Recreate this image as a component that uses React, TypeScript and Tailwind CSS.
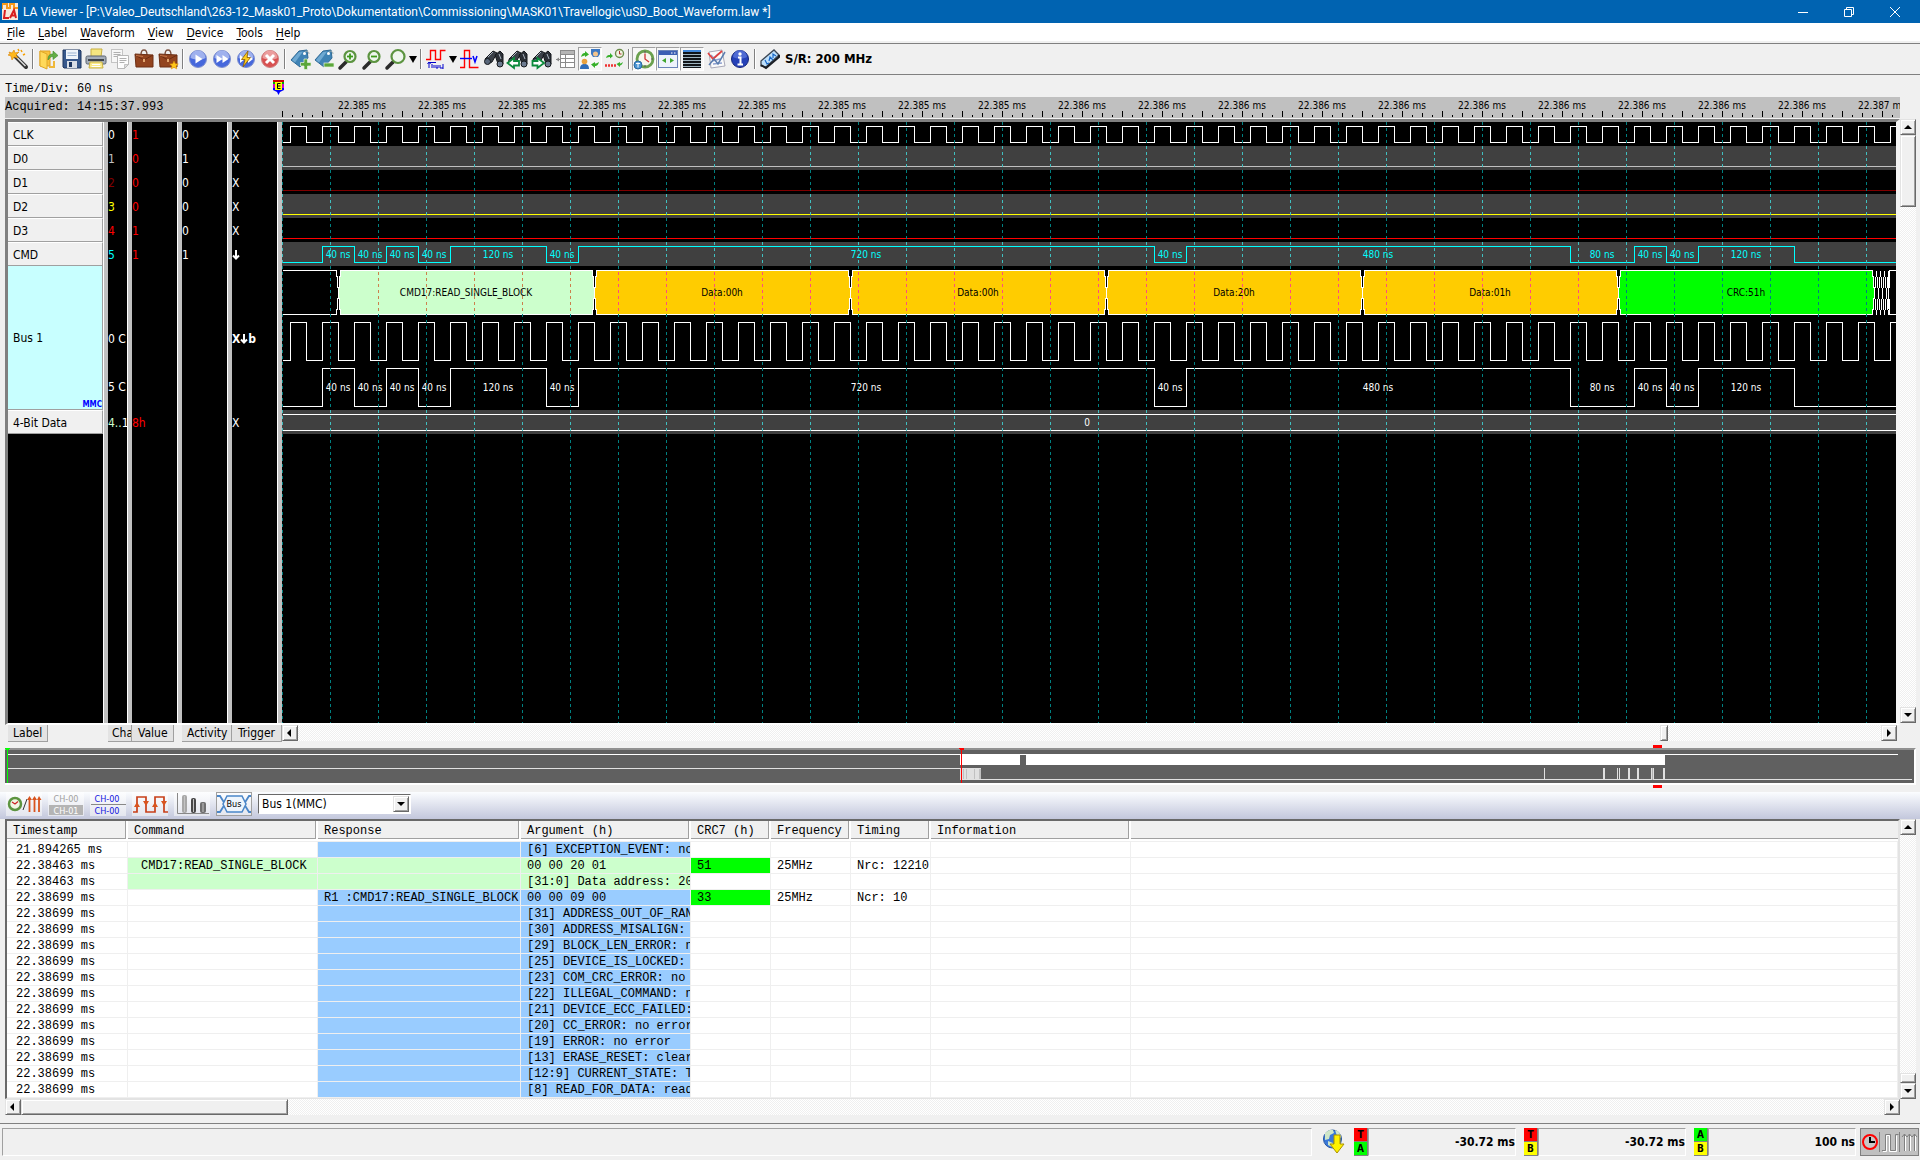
import type { ReactNode } from "react";
import clsx from "clsx";

const TRACK =
  "bg-[repeating-conic-gradient(#ffffff_0_25%,#efefef_0_50%)] bg-[length:2px_2px]";
const RAISED =
  "border border-t-[#e3e3e3] border-l-[#e3e3e3] border-r-[#696969] border-b-[#696969] bg-[#f0f0f0] shadow-[inset_1px_1px_#ffffff,inset_-1px_-1px_#a0a0a0]";
const SANS = "font-['DejaVu_Sans_Condensed','DejaVu_Sans',sans-serif]";
const MONO = "font-['Liberation_Mono',monospace]";

const MENUS = ["File", "Label", "Waveform", "View", "Device", "Tools", "Help"];

/* ---------- toolbar icons ---------- */

function Icon({ children }: { children: ReactNode }) {
  return (
    <svg width="24" height="24" viewBox="0 0 24 24" fill="none" className="shrink-0">
      {children}
    </svg>
  );
}

const Wand = (
  <Icon>
    <path d="M8 8l12 12" stroke="#333" strokeWidth="4" strokeLinecap="round" />
    <path d="M9 8.500l10.500 10.500" stroke="#ddd" strokeWidth="1.500" />
    <path d="M3 5l3 1 2-3 1 3 4-1-3 3 2 3-4-1-2 3-1-4-3-1 2-1z" fill="#ffb81c" stroke="#d98200" strokeWidth=".6" />
    <path d="M15 3l1 2M17 8l2-1M12 2l1 2" stroke="#f5a000" strokeWidth="1.500" />
  </Icon>
);
const Open = (
  <Icon>
    <path d="M4 4h10v15H4z" fill="#f9c440" stroke="#e0a020" />
    <path d="M4 4l7 3v15l-7-3z" fill="#ffd95a" stroke="#e0a828" />
    <path d="M13 20h5v-6" stroke="#efb83a" strokeWidth="2" />
    <path d="M12 13c0-5 2-6 5-6V4l5 4.500-5 4V9.500c-2 0-3 1-5 3.500z" fill="#63ad45" stroke="#3f8a2b" strokeWidth=".6" />
  </Icon>
);
const Save = (
  <Icon>
    <path d="M3 3h17l1 1v17H4l-1-1z" fill="#37588c" stroke="#1c355f" />
    <rect x="6" y="3" width="12" height="9" fill="#eef4fb" />
    <path d="M7.500 6h9M7.500 8.500h9" stroke="#9bb4d3" />
    <rect x="7" y="14" width="10" height="7" fill="#d9dee6" />
    <rect x="9" y="15" width="3" height="5" fill="#1c355f" />
  </Icon>
);
const Print = (
  <Icon>
    <path d="M7 2h11l-1 8H7z" fill="#f5e680" stroke="#c9b042" />
    <rect x="2" y="9" width="20" height="8" rx="1.500" fill="#a4adb9" stroke="#5a636f" />
    <rect x="4" y="12" width="16" height="2" fill="#3d4249" />
    <path d="M6 15h12l1 6H5z" fill="#fbeb8a" stroke="#c9b042" />
    <path d="M8 17.500h8M7.500 19.500h9" stroke="#fff" />
  </Icon>
);
const Copy = (
  <Icon>
    <rect x="3.500" y="2.500" width="11" height="13" fill="#f7f7f7" stroke="#c4c4c4" />
    <path d="M5.500 5.500h7M5.500 7.500h7M5.500 9.500h7" stroke="#b0b0b0" />
    <path d="M9.500 8.500h11v9l-4 4h-7z" fill="#fdfdfd" stroke="#b8b8b8" />
    <path d="M11.500 11.500h7M11.500 13.500h7M11.500 15.500h5" stroke="#b0b0b0" />
    <path d="M20.500 17.500l-4 4v-4z" fill="#ddd" stroke="#b0b0b0" strokeWidth=".7" />
  </Icon>
);
const caseBody = (
  <>
    <path d="M9 8c0-4 1-5 3-5s3 1 3 5" stroke="#7d5240" strokeWidth="1.400" />
    <path d="M3 7l18 1v12L4 20z" fill="#93441f" stroke="#6d2f15" />
    <path d="M3 8l9 5 9-5" stroke="#6d2d12" />
    <path d="M4 8.500l7 1" stroke="#c4754a" />
    <rect x="11" y="12" width="2" height="3" fill="#e2a56f" />
  </>
);
const Case = <Icon>{caseBody}</Icon>;
const CaseStar = (
  <Icon>
    {caseBody}
    <path d="M18 14l1.300 2.800 3 .2-2.300 2 .8 3-2.800-1.600L15.200 22l.8-3-2.300-2 3-.2z" fill="#ffc61a" stroke="#d98c00" strokeWidth=".5" />
  </Icon>
);

function Ball({ tone, children }: { tone: "blue" | "red"; children: ReactNode }) {
  const [edge, low, high] =
    tone === "blue" ? ["#7f90cf", "#4668dc", "#b5c3f2"] : ["#cf8080", "#d85050", "#f0b0b0"];
  return (
    <Icon>
      <circle cx="12" cy="12" r="8.500" fill={low} stroke={edge} />
      <path d="M4.500 11a7.500 7.500 0 0 1 15 0c-4 2-10 2-15 0z" fill={high} opacity=".8" />
      {children}
    </Icon>
  );
}
const Play = (
  <Ball tone="blue">
    <path d="M9.500 7.500v9l7-4.500z" fill="#fff" />
  </Ball>
);
const FastForward = (
  <Ball tone="blue">
    <path d="M6.500 8v8l6-4zM12.500 8v8l6-4z" fill="#fff" />
  </Ball>
);
const Bolt = (
  <Ball tone="blue">
    <path d="M6 8v8l5-4zM14 8v8l5-4z" fill="#fff" />
    <path d="M14 4L7.500 12.500H11L9 20l7.500-9.500H13z" fill="#ffce1f" stroke="#8a5b00" strokeWidth=".8" />
  </Ball>
);
const Stop = (
  <Ball tone="red">
    <path d="M8 8l8 8M16 8l-8 8" stroke="#fff" strokeWidth="3" />
  </Ball>
);

const tagBody = (
  <>
    <path d="M3 13L11 4l8-1 1 8-8 9z" fill="#3f83b5" stroke="#2f6a96" />
    <path d="M4 13l7-8 4-.5-8 11z" fill="#6fa9d2" />
    <path d="M16 6c2-3 5-2 5 1" stroke="#9aa" strokeWidth="1" />
    <circle cx="16.500" cy="6.500" r="1.500" fill="#fff" />
  </>
);
const TagAdd = (
  <Icon>
    {tagBody}
    <path d="M16 12h3.500v3.500H23V19h-3.500v3.500H16V19h-3.500v-3.500H16z" fill="#5ba63a" stroke="#e8f3e2" strokeWidth=".7" />
  </Icon>
);
const TagRemove = (
  <Icon>
    {tagBody}
    <rect x="12" y="16" width="10" height="4" fill="#5ba63a" stroke="#e8f3e2" strokeWidth=".7" />
  </Icon>
);
function Lens({ sign, big }: { sign?: "+" | "-"; big?: boolean }) {
  return (
    <Icon>
      <path d={big ? "M9 15l-6 6" : "M10 15l-6 6"} stroke="#2b2b2b" strokeWidth="3.500" strokeLinecap="round" />
      <circle cx="14" cy="9.500" r={big ? 6.5 : 5.5} fill="#eef6ee" stroke="#5c9440" strokeWidth="2.200" />
      {sign && <path d="M11 9.500h6" stroke="#3c9a1a" strokeWidth="1.800" />}
      {sign === "+" && <path d="M14 6.500v6" stroke="#3c9a1a" strokeWidth="1.800" />}
    </Icon>
  );
}
const TrigWave = (
  <Icon>
    <path d="M2 12.500h4.500v-9h5v9h5v-9h5" stroke="#f00" strokeWidth="1.400" />
    <path d="M5 21v-6M3.500 17L5 15l1.500 2M5 15.500h7M8 17v4M10 21v-3M12 18v3h2v-3M16 18v3h3M19 17v5" stroke="#00c" />
  </Icon>
);
const VoltWave = (
  <Icon>
    <path d="M2 20.500h4.500v-17h5v17h9" stroke="#f00" strokeWidth="1.400" />
    <path d="M2 11.500h12" stroke="#00f" strokeWidth="1.400" />
    <path d="M15 9l2 6 2-6" stroke="#00f" strokeWidth="1.500" />
  </Icon>
);
const glasses = (
  <>
    <path d="M3 12l8-8 4 2-5 9-4 2z" fill="#3b4048" stroke="#15181c" />
    <path d="M13 8l5-4 3 3v10l-4 2-2-5z" fill="#2b2f36" stroke="#15181c" />
    <circle cx="5.500" cy="14.500" r="3" fill="#59677a" stroke="#15181c" />
    <circle cx="18" cy="17" r="3" fill="#6d7b90" stroke="#15181c" />
    <path d="M6 10l5-5M17 7l2 5" stroke="#aab3bf" />
  </>
);
const Find = <Icon>{glasses}</Icon>;
const FindPrev = (
  <Icon>
    {glasses}
    <path d="M1.500 16L8 11v3h5v4.500H8V21z" fill="#fff" stroke="#0b8a3b" strokeWidth="1.800" />
  </Icon>
);
const FindNext = (
  <Icon>
    {glasses}
    <path d="M14 16l-6.500-5v3h-5v4.500h5V21z" fill="#fff" stroke="#0b8a3b" strokeWidth="1.800" />
  </Icon>
);
const ListView = (
  <Icon>
    <rect x="6.500" y="3.500" width="14" height="17" fill="#fff" stroke="#8a8a8a" />
    <rect x="7" y="4" width="13" height="3" fill="#b5b5b5" />
    <path d="M7 7.500h14M7 11.500h14M7 15.500h14M11.500 7v13M2 12.500h4" stroke="#8a8a8a" />
    <path d="M2 12.500l3-2v4z" fill="#8a8a8a" />
  </Icon>
);
const Users = (
  <Icon>
    <path d="M13 2h9v5l-2 3h-5l-2-3z" fill="#3d79c4" />
    <circle cx="17.500" cy="7" r="2.500" fill="#f4c48c" />
    <path d="M2 22c0-4 2-5 4.500-5S11 18 11 22z" fill="#2f6cb8" />
    <circle cx="6.500" cy="14.500" r="2.800" fill="#e9a13d" />
    <path d="M3 10c1-4 3-4 4-4V4l4 3.500L7 10V8.500C6 8.500 5 9 3 10zM21 15c-1 4-3 4-4 4v2l-4-3.500 4-2.500v1.500c1 0 2-.5 4-1.500z" fill="#36b02a" />
  </Icon>
);
const ClockArrow = (
  <Icon>
    <circle cx="17.500" cy="6.500" r="4" fill="#f3f3e3" stroke="#6b8d4b" strokeWidth="1.400" />
    <path d="M17.500 4v3h2" stroke="#a33" />
    <path d="M4 11c1-3 2-3 4-3V6l3 3-3 2.500V10c-1 0-2 0-4 1zM21 15c-1 3-2 3-3 3.500v1.500l-3.500-3 3.500-2v1.500c1 0 1-.5 3-1.500z" fill="#36b02a" />
    <path d="M3 18.500h11" stroke="#e33" strokeWidth="2.500" strokeDasharray="2 1" />
  </Icon>
);
const BigClock = (
  <Icon>
    <circle cx="13" cy="12" r="8" fill="#f6f6ec" stroke="#6aa04e" strokeWidth="2.800" />
    <path d="M13 6.500V12l4 3" stroke="#c33" strokeWidth="1.300" />
    <path d="M13 4v2M19 12h2M13 18v2" stroke="#555" />
    <circle cx="6" cy="18" r="4" fill="#4a94d4" stroke="#2768a0" />
    <path d="M6 15.500v5M4 16.500h4" stroke="#fff" />
  </Icon>
);
const WindowFit = (
  <Icon>
    <rect x="2.500" y="3.500" width="19" height="17" fill="#eef3fb" stroke="#6b84b8" />
    <rect x="3" y="4" width="18" height="4" fill="#3c5fb4" />
    <path d="M15 6h1.500M18 6h1.500" stroke="#fff" />
    <path d="M10 11v5l-4-2.500zM14 11v5l4-2.500z" fill="#3fa52d" />
  </Icon>
);
const Lines = (
  <Icon>
    <rect x="3" y="3" width="18" height="18" fill="#101418" />
    <path d="M3 4h18" stroke="#3f86d8" strokeWidth="2" />
    <path d="M3 7.500h18M3 10.500h18M3 13.500h18M3 16.500h18M3 19.500h18" stroke="#9fb4bf" />
  </Icon>
);
const Check = (
  <Icon>
    <path d="M5 5l13-2 3 16-14 2z" fill="#fafafa" stroke="#a8a8b8" />
    <path d="M7 8l3 3M14 7l-4 4M8 14l8-2M9 17l9-1" stroke="#8fa0d0" strokeWidth="1.300" />
    <path d="M4 6l5 6 9-8" stroke="#e04040" strokeWidth="1.700" />
    <path d="M5 18l5-6 4 5 7-12" stroke="#5a7cae" strokeWidth="1.500" />
  </Icon>
);
const Info = (
  <Icon>
    <circle cx="12" cy="12" r="8.500" fill="#2541b8" stroke="#14257c" />
    <path d="M5 10a7 7 0 0 1 14 0c-4 2-10 2-14 0z" fill="#5f7ce0" opacity=".7" />
    <circle cx="12" cy="7" r="1.700" fill="#fff" />
    <path d="M10 10.500h2.500V17M9.500 17.500h5.500" stroke="#fff" strokeWidth="2" />
  </Icon>
);
const Ticket = (
  <Icon>
    <path d="M3 14L16 3l5 5L8 20l-5-1z" fill="#bfe0fb" stroke="#3b4654" strokeWidth="1.300" />
    <path d="M3 18l5 3 13-11V8" fill="none" stroke="#1b1f26" strokeWidth="2" />
    <path d="M7 13l2 4 2-1M11 14l1-4 3 3M15 11v-4l3 2" stroke="#1667c8" strokeWidth="1.200" />
  </Icon>
);

function Tool({ name, pressed, children }: { name: string; pressed?: boolean; children: ReactNode }) {
  return (
    <button
      type="button"
      aria-label={name}
      className={clsx(
        "flex size-6 items-center justify-center border",
        pressed
          ? "border-t-[#a0a0a0] border-r-white border-b-white border-l-[#a0a0a0] bg-[#f7f7f7]"
          : "border-transparent"
      )}
    >
      {children}
    </button>
  );
}

function Caret({ name }: { name: string }) {
  return (
    <button type="button" aria-label={name} className="flex h-6 w-[10px] items-center justify-center">
      <svg width="8" height="7" viewBox="0 0 8 7">
        <path d="M0 0h8L4 7z" />
      </svg>
    </button>
  );
}

const Sep = () => <div className="mx-[2px] h-5 w-[2px] border-l border-[#808080] bg-white" />;

/* ---------- scroll bars ---------- */

const ARROWS = {
  up: "M4 1l4 4H0z",
  down: "M0 1h8L4 5z",
  left: "M5 0v8L1 4z",
  right: "M2 0v8l4-4z",
};

function ScrollButton({ dir }: { dir: keyof typeof ARROWS }) {
  const vertical = dir === "up" || dir === "down";
  return (
    <button type="button" aria-label={`Scroll ${dir}`} className={clsx("flex size-4 shrink-0 items-center justify-center", RAISED)}>
      <svg width="8" height={vertical ? 6 : 8} viewBox={vertical ? "0 0 8 6" : "0 0 8 8"}>
        <path d={ARROWS[dir]} />
      </svg>
    </button>
  );
}

/* ---------- waveform ---------- */

const DIV = 48;
const DIVS = 34;
const END = 1900;

const SIGNALS = [
  { name: "CLK", ch: "0", chColor: "text-white", value: "1", activity: "0", trigger: "any" },
  { name: "D0", ch: "1", chColor: "text-[#c0c0c0]", value: "0", activity: "1", trigger: "any" },
  { name: "D1", ch: "2", chColor: "text-[#800000]", value: "0", activity: "0", trigger: "any" },
  { name: "D2", ch: "3", chColor: "text-[#ffff00]", value: "0", activity: "0", trigger: "any" },
  { name: "D3", ch: "4", chColor: "text-[#ff0000]", value: "1", activity: "0", trigger: "any" },
  { name: "CMD", ch: "5", chColor: "text-[#00ffff]", value: "1", activity: "1", trigger: "falling" },
];

// CMD line: edges in pixels from the left end, the first one rising
const EDGES = [40, 72, 104, 136, 168, 264, 296, 872, 904, 1288, 1352, 1384, 1416, 1512];
const PULSES = ["40 ns", "40 ns", "40 ns", "40 ns", "120 ns", "40 ns", "720 ns", "40 ns", "480 ns", "80 ns", "40 ns", "40 ns", "120 ns"];

const PACKETS = [
  { text: "CMD17:READ_SINGLE_BLOCK", fill: "#ccffcc", grid: "#cc7f4c" },
  { text: "Data:00h", fill: "#ffcc00", grid: "#ff4c80" },
  { text: "Data:00h", fill: "#ffcc00", grid: "#ff4c80" },
  { text: "Data:20h", fill: "#ffcc00", grid: "#ff4c80" },
  { text: "Data:01h", fill: "#ffcc00", grid: "#ff4c80" },
  { text: "CRC:51h", fill: "#00ff00", grid: "#007f80" },
];
const PACKET_START = 56;
const PACKET_WIDTH = 256;

function clockPath(high: number, low: number) {
  let d = `M0 ${low}`;
  for (let x = 8; x < END; x += 32) d += `H${x}V${high}H${x + 16}V${low}`;
  return d;
}

function cmdPath(high: number, low: number) {
  const steps = EDGES.map((x, i) => `H${x}V${i % 2 === 0 ? high : low}`);
  return `M0 ${low}${steps.join("")}H${END}`;
}

// six-sided stepped outline of one decoded packet
function packetPath(a: number, b: number) {
  return `M${a + 2} 148H${b - 2}v6h1v11h1v11h-1v11h-1v5H${a + 2}v-5h-1v-11h-1v-11h1v-11h1z`;
}

const BANDS = [
  { from: 0, to: 24, color: "#008080" },
  { from: 24, to: 48, color: "#40c0c0" },
  { from: 48, to: 72, color: "#008080" },
  { from: 72, to: 96, color: "#40c0c0" },
  { from: 96, to: 120, color: "#008080" },
  { from: 120, to: 144, color: "#40c0c0" },
  { from: 144, to: 148, color: "#008080" },
  { from: 148, to: 192, color: "packet" },
  { from: 192, to: 288, color: "#008080" },
  { from: 288, to: 312, color: "#40c0c0" },
  { from: 312, to: 2000, color: "#008080" },
];

function packetGridColor(x: number) {
  const packet = PACKETS[Math.floor((x - PACKET_START) / PACKET_WIDTH)];
  return packet ? packet.grid : "#008080";
}

function PulseLabels({ y, className }: { y: number; className: string }) {
  return (
    <g className={className}>
      {PULSES.map((text, i) => (
        <text key={i} x={(EDGES[i] + EDGES[i + 1]) / 2} y={y} textAnchor="middle">
          {text}
        </text>
      ))}
    </g>
  );
}

function Waveform() {
  return (
    <div className="relative min-w-0 flex-1 overflow-hidden bg-black">
      <svg className={clsx("absolute inset-0 h-full w-full text-[10px]", SANS)} fill="none">
        {[24, 72, 120, 288].map((y) => (
          <rect key={y} x="0" y={y} width="100%" height="24" fill="#404040" />
        ))}
        <g transform="translate(.5 .5)" shapeRendering="crispEdges">
          <path d={clockPath(4, 20)} stroke="#fff" />
          <path d={`M0 44H${END}`} stroke="#c0c0c0" />
          <path d={`M0 68H${END}`} stroke="#800000" />
          <path d={`M0 92H${END}`} stroke="#ffff00" />
          <path d={`M0 116H${END}`} stroke="#ff0000" />
          <path d={cmdPath(124, 140)} stroke="#00ffff" />
          <path d="M0 148H54v6h1v11h1v11h-1v11h-1v5H0" stroke="#fff" />
          {PACKETS.map((p, i) => (
            <path
              key={i}
              d={packetPath(PACKET_START + i * PACKET_WIDTH, PACKET_START + (i + 1) * PACKET_WIDTH)}
              fill={p.fill}
              stroke="#fff"
            />
          ))}
          {[1592, 1596, 1600, 1604].map((x) => (
            <path key={x} d={`M${x + 2} 148v6M${x + 1} 154v11M${x + 3} 154v11M${x} 165v11M${x + 1} 176v11M${x + 3} 176v11M${x + 2} 187v5`} stroke="#fff" />
          ))}
          <path d={`M${END} 148H1607v6h-1v32h1v6H${END}`} stroke="#fff" />
          <path d={clockPath(200, 238)} stroke="#fff" />
          <path d={cmdPath(246, 284)} stroke="#fff" />
          <path d={`M0 292H${END}M0 308H${END}`} stroke="#fff" />
        </g>
        <PulseLabels y={136} className="fill-[#00ffff]" />
        <PulseLabels y={269} className="fill-white" />
        <g className="fill-black">
          {PACKETS.map((p, i) => (
            <text key={i} x={PACKET_START + (i + 0.5) * PACKET_WIDTH} y="174" textAnchor="middle">
              {p.text}
            </text>
          ))}
        </g>
        <text x="805" y="304" textAnchor="middle" className="fill-white">
          0
        </text>
        <g transform="translate(.5 0)" shapeRendering="crispEdges">
          {Array.from({ length: DIVS }, (_, n) =>
            BANDS.map((b) => (
              <path
                key={`${n}-${b.from}`}
                d={`M${n * DIV} ${b.from}V${b.to}`}
                stroke={b.color === "packet" ? packetGridColor(n * DIV) : b.color}
                strokeDasharray="3 3"
                strokeDashoffset={b.from % 6}
              />
            ))
          )}
        </g>
      </svg>
    </div>
  );
}

function Ruler() {
  const ticks = Array.from({ length: 162 }, (_, i) => {
    const top = i % 4 === 0 ? 14 : i % 2 === 0 ? 16 : 18;
    return `M${i * 10} ${top}V20`;
  }).join("");
  const labels = Array.from({ length: 20 }, (_, i) => (i < 9 ? "22.385 ms" : i < 19 ? "22.386 ms" : "22.387 ms"));
  return (
    <svg className={clsx("h-[21px] min-w-0 flex-1 text-[10px]", SANS)}>
      <path d={ticks} stroke="#000" transform="translate(.5 0)" shapeRendering="crispEdges" />
      {labels.map((text, i) => (
        <text key={i} x={80 + i * 80} y="12" textAnchor="middle">
          {text}
        </text>
      ))}
    </svg>
  );
}

function Column({ width, children }: { width: string; children: ReactNode }) {
  return (
    <>
      <div className={clsx("shrink-0 overflow-hidden whitespace-nowrap", width)}>{children}</div>
      <div className="w-[5px] shrink-0 border-l border-white bg-[#c0c0c0]" />
    </>
  );
}

const Cell = ({ className, children }: { className?: string; children?: ReactNode }) => (
  <div className={clsx("flex h-6 items-center pt-[2px]", className)}>{children}</div>
);

const LABEL_CELL = "border-r border-b border-[#a0a0a0] border-t border-t-white bg-[#f0f0f0] pl-[5px] text-black";

const DownArrow = () => (
  <svg width="8" height="10" viewBox="0 0 8 10">
    <path d="M4 0v8M1 5.500l3 3 3-3" stroke="#fff" strokeWidth="2" fill="none" />
  </svg>
);

function SignalPanel() {
  return (
    <div className="flex min-w-0 flex-1 border-t-[3px] border-r-4 border-b-2 border-l-[3px] border-t-[#808080] border-r-[#f4f4f4] border-b-white border-l-[#808080] bg-black text-[12px] leading-none text-white">
      <Column width="w-[95px]">
        {SIGNALS.map((s) => (
          <Cell key={s.name} className={LABEL_CELL}>
            {s.name}
          </Cell>
        ))}
        <div className="flex h-36 flex-col justify-between border-r border-b border-[#a0a0a0] bg-[#c8ffff] pl-[5px] text-black">
          <span className="h-2" />
          <span>Bus 1</span>
          <span className="self-end text-[8px] font-bold text-[#0000ff]">MMC</span>
        </div>
        <Cell className={LABEL_CELL}>4-Bit Data</Cell>
      </Column>
      <Column width="w-[19px]">
        {SIGNALS.map((s) => (
          <Cell key={s.name} className={s.chColor}>
            {s.ch}
          </Cell>
        ))}
        <Cell className="mt-[60px]">0 C</Cell>
        <Cell className="mt-6">5 C</Cell>
        <Cell className="mt-3">
          <span className="text-[#ccffcc]">4..</span>1
        </Cell>
      </Column>
      <Column width="w-[45px]">
        <div className="text-[#ff0000]">
          {SIGNALS.map((s) => (
            <Cell key={s.name}>{s.value}</Cell>
          ))}
          <Cell className="mt-36">8h</Cell>
        </div>
      </Column>
      <Column width="w-[45px]">
        {SIGNALS.map((s) => (
          <Cell key={s.name}>{s.activity}</Cell>
        ))}
      </Column>
      <Column width="w-[45px]">
        {SIGNALS.map((s) => (
          <Cell key={s.name}>{s.trigger === "falling" ? <DownArrow /> : "X"}</Cell>
        ))}
        <Cell className="mt-[60px] font-bold">
          X<DownArrow />b
        </Cell>
        <Cell className="mt-[60px]">X</Cell>
      </Column>
      <Waveform />
    </div>
  );
}

function ColumnButton({ className, children }: { className: string; children: ReactNode }) {
  return (
    <button
      type="button"
      className={clsx(
        "h-[17px] shrink-0 overflow-hidden border-r border-b border-[#a0a0a0] bg-[#e3e3e3] text-left text-[12px] leading-none whitespace-nowrap",
        className
      )}
    >
      {children}
    </button>
  );
}

/* ---------- capture overview ---------- */

function Overview() {
  return (
    <div className="mt-[6px] mr-1 ml-[5px] h-[37px] border-t-2 border-r-2 border-b-2 border-t-[#909090] border-r-white border-b-white bg-[#606060]">
      <svg className="block h-[33px] w-full overflow-visible" shapeRendering="crispEdges">
        <rect x="3" y="4" width="99%" height="1" fill="#fff" />
        <rect x="3" y="18" width="952" height="1" fill="#e0e0e0" />
        <rect x="955" y="29" width="952" height="1" fill="#e0e0e0" />
        <rect x="955" y="4" width="60" height="11" fill="#fff" />
        <rect x="1021" y="4" width="639" height="11" fill="#fff" />
        <rect x="955" y="18" width="21" height="12" fill="#e0e0e0" />
        <path d="M958.500 19v10M961.500 19v10M969.500 19v10M974.500 19v10M975.500 19v10" stroke="#c0c0c0" />
        <path d="M1539.500 18v12M1598.500 18v12M1599.500 18v12M1612.500 18v12M1614.500 18v12M1623.500 18v12M1624.500 18v12M1632.500 18v12M1633.500 18v12M1646.500 18v12M1648.500 18v12M1658.500 18v12M1659.500 18v12" stroke="#e0e0e0" />
        <path d="M1647.500 18v12" stroke="#b0b0b0" />
        <path d="M2.500-1v34" stroke="#0f0" />
        <path d="M0-2h5l-1 2H1z" fill="#0f0" />
        <path d="M956.500-1v34" stroke="#f00" />
        <path d="M954-2h5v1l-1 1h-3l-1-1z" fill="#f00" />
        <rect x="1648" y="-5" width="9" height="3" fill="#f00" />
        <rect x="1648" y="35" width="9" height="3" fill="#f00" />
      </svg>
    </div>
  );
}

/* ---------- decode report ---------- */

function ReportTool({ name, pressed, children }: { name: string; pressed?: boolean; children: ReactNode }) {
  return (
    <button
      type="button"
      aria-label={name}
      className={clsx(
        "h-6 w-9 bg-linear-to-b from-[#fdfeff] to-[#e4e6ee]",
        pressed && "outline -outline-offset-1 outline-[#a0a0a0]"
      )}
    >
      <svg width="36" height="24" viewBox="0 0 36 24" fill="none" className={clsx("block text-[9px]", SANS)}>
        {children}
      </svg>
    </button>
  );
}

function ReportToolbar() {
  return (
    <div className="mt-[7px] flex h-[27px] items-start gap-[6px] bg-linear-to-b from-[#fbfdff] to-[#c3c7dc] pl-[6px]">
      <ReportTool name="Clock and edges">
        <circle cx="9" cy="12" r="6" fill="#f2f6e4" stroke="#5c9440" strokeWidth="2.500" />
        <path d="M9 12l3-2.500M9 12l-3-2" stroke="#c22" strokeWidth="1.200" />
        <path d="M17 18l4-11" stroke="#333" />
        <path d="M23.500 20V6M28.500 20V6M33 20V6" stroke="#d9541e" strokeWidth="1.800" />
        <path d="M21 8l2.500-4L26 8zM26 8l2.500-4L31 8zM31 8l2-4 2.500 4z" fill="#d9541e" />
      </ReportTool>
      <ReportTool name="Swap channel names">
        <rect x="1" y="13" width="34" height="10" fill="#b4b4b4" />
        <text x="18" y="10" textAnchor="middle" fill="#a0a0a0">CH-00</text>
        <text x="18" y="22" textAnchor="middle" fill="#fff">CH-01</text>
      </ReportTool>
      <ReportTool name="Channel names">
        <path d="M1 12.500h35" stroke="#888" />
        <text x="17" y="10" textAnchor="middle" fill="#1414e0">CH-00</text>
        <text x="17" y="22" textAnchor="middle" fill="#1414e0">CH-00</text>
      </ReportTool>
      <ReportTool name="Edges">
        <path d="M1 20h4V5h9v15h9V5h9v15h4" stroke="#c8401a" strokeWidth="1.700" />
        <path d="M2 15l3-5 3 5zM11 9l3 5 3-5zM20 15l3-5 3 5zM29 9l3 5 3-5z" fill="#d9541e" />
      </ReportTool>
      <ReportTool name="Statistics">
        <path d="M3.500 1v20.500H35" stroke="#888" />
        <rect x="8" y="3" width="5" height="18" rx="2" fill="#a8a8a8" />
        <rect x="17" y="6" width="5" height="15" rx="2" fill="#484848" />
        <rect x="26" y="10" width="6" height="11" rx="2" fill="#707070" />
        <path d="M10.500 4v16M19.500 7v13M29 11v9" stroke="#c4c4c4" />
      </ReportTool>
      <ReportTool name="Bus decode" pressed>
        <path d="M1 4h3l5 8-5 8H1M36 4h-3l-5 8 5 8h3" stroke="#4a86c8" strokeWidth="1.800" />
        <path d="M11 4h15l4 8-4 8H11l-4-8z" fill="#eef5fc" stroke="#4a86c8" strokeWidth="1.500" />
        <text x="18" y="15" textAnchor="middle" fill="#000">Bus</text>
      </ReportTool>
      <div className="relative mt-[2px] h-5 w-[153px] text-[12px]">
        <select
          aria-label="Bus"
          className="h-5 w-full appearance-none border border-t-[#696969] border-r-white border-b-white border-l-[#696969] bg-white pl-[3px] leading-none"
        >
          <option>Bus 1(MMC)</option>
        </select>
        <span className={clsx("pointer-events-none absolute top-[2px] right-[2px] flex size-4 items-center justify-center", RAISED)}>
          <svg width="8" height="6" viewBox="0 0 8 6">
            <path d={ARROWS.down} />
          </svg>
        </span>
      </div>
    </div>
  );
}

type Tone = "blue" | "green";
interface Row {
  time: string;
  tone: Tone;
  command?: string;
  response?: string;
  argument: string;
  crc?: string;
  freq?: string;
  timing?: string;
}

const flag = (argument: string): Row => ({ time: "22.38699 ms", tone: "blue", argument });

const ROWS: Row[] = [
  { time: "21.894265 ms", tone: "blue", argument: "[6] EXCEPTION_EVENT: no" },
  { time: "22.38463 ms", tone: "green", command: "CMD17:READ_SINGLE_BLOCK", argument: "00 00 20 01", crc: "51", freq: "25MHz", timing: "Nrc: 12210" },
  { time: "22.38463 ms", tone: "green", argument: "[31:0] Data address: 20" },
  { time: "22.38699 ms", tone: "blue", response: "R1 :CMD17:READ_SINGLE_BLOCK", argument: "00 00 09 00", crc: "33", freq: "25MHz", timing: "Ncr: 10" },
  flag("[31] ADDRESS_OUT_OF_RAN"),
  flag("[30] ADDRESS_MISALIGN:"),
  flag("[29] BLOCK_LEN_ERROR: n"),
  flag("[25] DEVICE_IS_LOCKED:"),
  flag("[23] COM_CRC_ERROR: no"),
  flag("[22] ILLEGAL_COMMAND: n"),
  flag("[21] DEVICE_ECC_FAILED:"),
  flag("[20] CC_ERROR: no error"),
  flag("[19] ERROR: no error"),
  flag("[13] ERASE_RESET: clear"),
  flag("[12:9] CURRENT_STATE: T"),
  flag("[8] READ_FOR_DATA: read"),
];

const COLUMNS = [
  { title: "Timestamp", width: "w-[121px]" },
  { title: "Command", width: "w-[190px]" },
  { title: "Response", width: "w-[203px]" },
  { title: "Argument (h)", width: "w-[170px]" },
  { title: "CRC7 (h)", width: "w-[80px]" },
  { title: "Frequency", width: "w-[80px]" },
  { title: "Timing", width: "w-[80px]" },
  { title: "Information", width: "w-[200px]" },
  { title: "", width: "" },
];

const TONES: Record<Tone, string> = {
  blue: "bg-[#99ccff]",
  green: "bg-[#ccffcc]",
};

function Td({ className, children }: { className?: string; children?: ReactNode }) {
  return (
    <td className={clsx("h-4 border-r border-b border-[#efefef] py-0 pr-0", className ?? "pl-[6px]")}>
      <div className="h-[15px] overflow-hidden leading-[17px] whitespace-nowrap">{children}</div>
    </td>
  );
}

function ReportTable() {
  return (
    <div className="mr-1 flex">
      <div className="ml-[5px] min-w-0 flex-1">
        <div className="border-t-2 border-r-2 border-b border-l-2 border-t-[#696969] border-r-[#e3e3e3] border-b-[#e3e3e3] border-l-[#696969] bg-white">
          <table className={clsx("w-full table-fixed border-separate border-spacing-0 text-[12px]", MONO)}>
            <thead>
              <tr>
                {COLUMNS.map((c) => (
                  <th key={c.title} className={clsx("h-[21px] border-b border-[#efefef] p-0 text-left align-top font-normal", c.width)}>
                    <div className={clsx("mb-[2px] h-[18px] border-b border-[#a0a0a0] bg-[#f0f0f0] pl-[6px] leading-[21px]", c.title && "mr-[2px] border-r")}>
                      {c.title}
                    </div>
                  </th>
                ))}
              </tr>
            </thead>
            <tbody>
              {ROWS.map((r, i) => (
                <tr key={i}>
                  <Td className="pl-[9px]">{r.time}</Td>
                  <Td className={clsx("pl-[13px]", r.tone === "green" && TONES.green)}>{r.command}</Td>
                  <Td className={clsx("pl-[6px]", TONES[r.tone])}>{r.response}</Td>
                  <Td className={clsx("pl-[6px]", TONES[r.tone])}>{r.argument}</Td>
                  <Td className={clsx("pl-[6px]", r.crc && "bg-[#00ff00]")}>{r.crc}</Td>
                  <Td>{r.freq}</Td>
                  <Td>{r.timing}</Td>
                  <Td />
                  <Td />
                </tr>
              ))}
            </tbody>
          </table>
        </div>
        <div className={clsx("flex h-4", TRACK)}>
          <ScrollButton dir="left" />
          <div className={clsx("w-[267px]", RAISED)} />
          <div className="grow" />
          <ScrollButton dir="right" />
        </div>
      </div>
      <div className={clsx("mb-4 flex w-4 flex-col", TRACK)}>
        <ScrollButton dir="up" />
        <div className="grow" />
        <div className={clsx("h-[10px]", RAISED)} />
        <ScrollButton dir="down" />
      </div>
    </div>
  );
}

/* ---------- status bar ---------- */

const BADGES: Record<string, string> = {
  T: "bg-[#ff0000]",
  A: "bg-[#00ff00]",
  B: "bg-[#ffff00]",
};

const SUNKEN = "h-7 border border-t-[#a0a0a0] border-r-white border-b-white border-l-[#a0a0a0]";

function Measure({ top, bottom, value }: { top: string; bottom: string; value: string }) {
  return (
    <div className="mr-2 flex">
      <div className="flex flex-col text-[10px] leading-none font-bold">
        {[top, bottom].map((b) => (
          <span key={b} className={clsx("flex h-[14px] w-[14px] items-center justify-center border-r border-b border-[#808080]", BADGES[b])}>
            {b}
          </span>
        ))}
      </div>
      <div className={clsx("flex w-[148px] items-center justify-end text-[12px] font-bold", SUNKEN)}>{value}</div>
    </div>
  );
}

function StatusBar() {
  return (
    <footer className="mt-2 flex h-[37px] items-start border-t border-[#808080] pt-1 pr-px pl-[2px]">
      <div className={clsx("grow", SUNKEN)} />
      <svg width="24" height="26" viewBox="0 0 24 26" className="mr-[8px] ml-[10px]">
        <circle cx="10.500" cy="11" r="9" fill="#3a78d8" stroke="#2454a0" />
        <path d="M3 5c3-3 6-4 8-3l1 3-4 2-1 4-4 1zM13 2c4 1 6 4 6 8l-4-2zM6 13l5 2-1 4-4-2z" fill="#cfe6c8" />
        <path d="M12 7h6v9h4l-7 9-7-9h4z" fill="#fff200" stroke="#a89000" />
      </svg>
      <Measure top="T" bottom="A" value="-30.72 ms" />
      <Measure top="T" bottom="B" value="-30.72 ms" />
      <Measure top="A" bottom="B" value="100 ns" />
      <div className="-ml-1 h-7 border border-[#808080] bg-[#c0c0c0]">
        <svg width="57" height="26" viewBox="0 0 57 26" fill="none">
          <circle cx="9" cy="13" r="7" fill="#c8c8c8" stroke="#f00" strokeWidth="2" />
          <path d="M9 8v5h5" stroke="#000" strokeWidth="2" />
          <path d="M18.500 3v20M38.500 3v20" stroke="#808080" />
          <path d="M21 21.500h3.500v-16h5v16h5v-16h3" stroke="#808080" />
          <path d="M22 22.500h3.500v-16h3v16h7v-16" stroke="#fff" />
          <path d="M43.500 22V5M48.500 22V5M53.500 22V5M41 8l2.500-3L46 8l2.500-3L51 8l2.500-3L56 8" stroke="#808080" />
          <path d="M44.500 22V7M49.500 22V7M54.500 22V7" stroke="#fff" />
        </svg>
      </div>
    </footer>
  );
}

/* ---------- window ---------- */

function TitleBar() {
  return (
    <header className="flex h-[23px] items-center bg-[#0063b1] pr-[2px] pl-[2px] text-white">
      <svg width="16" height="17" viewBox="0 0 16 17" fill="none">
        <rect width="16" height="17" fill="#f6e9dc" />
        <path d="M0 6V1h5v4h3V1h4v4h4" stroke="#f59a1b" strokeWidth="2" />
        <path d="M3 7l-1 8h5M8 15l4-8 2 8M9.500 12.500h4" stroke="#d81e1e" strokeWidth="2" />
      </svg>
      <h1 className="ml-[5px] grow pt-px font-['Roboto',sans-serif] text-[12px] leading-none whitespace-nowrap">
        LA Viewer - [P:\Valeo_Deutschland\263-12_Mask01_Proto\Dokumentation\Commissioning\MASK01\Travellogic\uSD_Boot_Waveform.law *]
      </h1>
      {[
        { name: "Minimize", d: "M0 5.500h10" },
        { name: "Restore", d: "M.5 2.500h7v7h-7zM2.500 2.500v-2h7v7h-2" },
        { name: "Close", d: "M0 0l10 10M10 0L0 10" },
      ].map((b) => (
        <button key={b.name} type="button" aria-label={b.name} className="flex h-5 w-[46px] items-center justify-center">
          <svg width="10" height="10" viewBox="0 0 10 10" fill="none" stroke="#fff">
            <path d={b.d} />
          </svg>
        </button>
      ))}
    </header>
  );
}

function MainToolbar() {
  return (
    <div className="mt-[2px] flex h-8 items-center border-t border-b border-[#808080] pl-[6px]">
      <Tool name="Wizard">{Wand}</Tool>
      <Sep />
      <Tool name="Open">{Open}</Tool>
      <Tool name="Save">{Save}</Tool>
      <Tool name="Print">{Print}</Tool>
      <Tool name="Copy">{Copy}</Tool>
      <Tool name="Work folder">{Case}</Tool>
      <Tool name="New work folder">{CaseStar}</Tool>
      <Sep />
      <Tool name="Run">{Play}</Tool>
      <Tool name="Run repeatedly">{FastForward}</Tool>
      <Tool name="Run now">{Bolt}</Tool>
      <Tool name="Stop">{Stop}</Tool>
      <Sep />
      <Tool name="Add label">{TagAdd}</Tool>
      <Tool name="Remove label">{TagRemove}</Tool>
      <Tool name="Zoom in"><Lens sign="+" /></Tool>
      <Tool name="Zoom out"><Lens sign="-" /></Tool>
      <Tool name="Zoom"><Lens big /></Tool>
      <Caret name="Zoom options" />
      <Sep />
      <Tool name="Trigger">{TrigWave}</Tool>
      <Caret name="Trigger options" />
      <Tool name="Threshold">{VoltWave}</Tool>
      <Tool name="Find">{Find}</Tool>
      <Tool name="Find previous">{FindPrev}</Tool>
      <Tool name="Find next">{FindNext}</Tool>
      <Tool name="List">{ListView}</Tool>
      <Tool name="Synchronize" pressed>{Users}</Tool>
      <Tool name="Time order">{ClockArrow}</Tool>
      <Sep />
      <Tool name="Pulse time" pressed>{BigClock}</Tool>
      <Tool name="Fit window" pressed>{WindowFit}</Tool>
      <Tool name="Row shading" pressed>{Lines}</Tool>
      <Tool name="Notes">{Check}</Tool>
      <Tool name="About">{Info}</Tool>
      <Sep />
      <Tool name="Sample rate">{Ticket}</Tool>
      <span className="ml-[3px] text-[13px] font-bold">S/R: 200 MHz</span>
    </div>
  );
}

export default function App() {
  return (
    <div className={clsx("flex min-h-screen flex-col bg-[#f0f0f0] text-black", SANS)}>
      <TitleBar />
      <nav className="flex h-[18px] items-center gap-[13px] bg-white pt-[2px] pl-[7px] text-[12px] leading-none">
        {MENUS.map((m) => (
          <button key={m} type="button">
            <span className="underline underline-offset-2">{m[0]}</span>
            {m.slice(1)}
          </button>
        ))}
      </nav>
      <MainToolbar />

      <div className={clsx("flex h-[22px] items-end pl-[5px] text-[12px] leading-[15px]", MONO)}>
        <span className="w-[268px]">Time/Div: 60 ns</span>
        <svg width="12" height="17" viewBox="0 0 12 17" className="mb-px">
          <path d="M0 2h11v9l-4 2-1.500 3L4 13l-4-2z" fill="#00f" />
          <rect width="11" height="2" y="1" fill="#c00" />
          <rect width="11" height="2" y="3" fill="#0a0" />
          <rect width="11" height="4" y="5" fill="#c0c" />
          <rect x="2" y="3" width="7" height="8" fill="#ff0" />
          <path d="M7.500 4.500h-3v5h3M4.500 7h3" stroke="#000" fill="none" />
        </svg>
      </div>
      <div className="mr-5 mb-px ml-[5px] flex bg-[#c0c0c0]">
        <span className={clsx("w-[277px] shrink-0 pt-[3px] text-[12px] leading-[15px]", MONO)}>Acquired: 14:15:37.993</span>
        <Ruler />
      </div>

      <main className="mr-1 ml-[5px] flex grow">
        <SignalPanel />
        <div className={clsx("mb-[2px] flex w-4 flex-col", TRACK)}>
          <ScrollButton dir="up" />
          <div className={clsx("h-[72px]", RAISED)} />
          <div className="grow" />
          <ScrollButton dir="down" />
        </div>
      </main>
      <div className="mr-5 flex pl-2">
        <ColumnButton className="w-10 pl-[5px]">Label</ColumnButton>
        <ColumnButton className="ml-[60px] w-6 pl-[4px]">Cha</ColumnButton>
        <ColumnButton className="w-[42px] pl-[6px]">Value</ColumnButton>
        <ColumnButton className="ml-2 w-[50px] pl-[5px]">Activity</ColumnButton>
        <ColumnButton className="w-[50px] pl-[6px]">Trigger</ColumnButton>
        <div className={clsx("mr-[3px] flex h-4 flex-1", TRACK)}>
          <ScrollButton dir="left" />
          <div className="grow-[1360]" />
          <div className={clsx("w-2", RAISED)} />
          <div className="grow-[213]" />
          <ScrollButton dir="right" />
        </div>
      </div>

      <Overview />
      <ReportToolbar />
      <ReportTable />
      <StatusBar />
    </div>
  );
}
